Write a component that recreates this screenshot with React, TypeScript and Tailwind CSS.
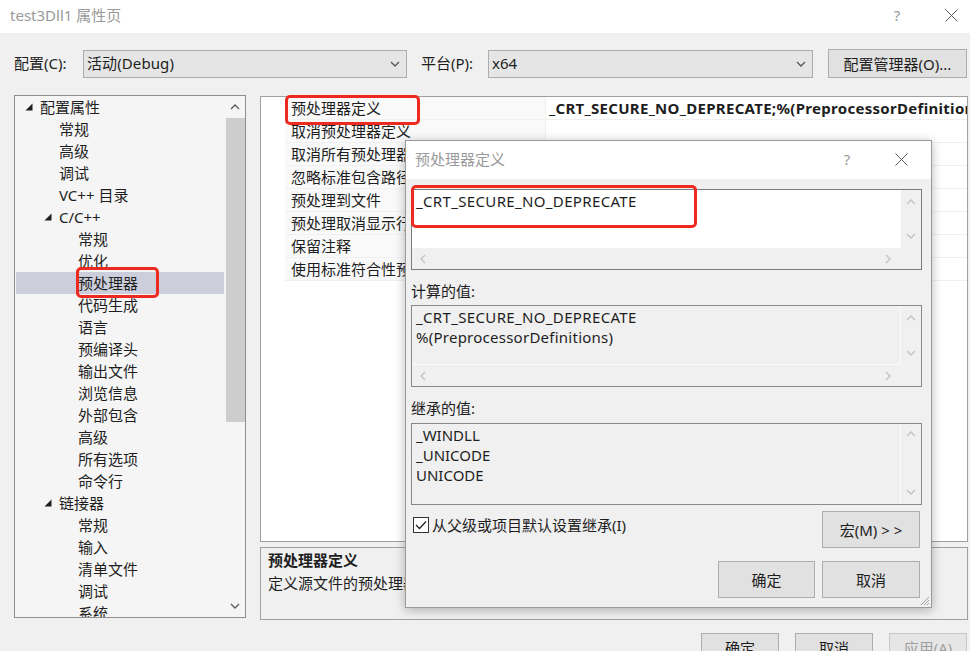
import React from "react";

const Chev = ({ dir, color = "#606060", size = 9 }: { dir: "up" | "down" | "left" | "right"; color?: string; size?: number }) => {
  const pts: Record<string, string> = {
    up: "1,6 5,2 9,6",
    down: "1,2 5,6 9,2",
    left: "6,1 2,5 6,9",
    right: "2,1 6,5 2,9",
  };
  const vertical = dir === "up" || dir === "down";
  return (
    <svg width={vertical ? size + 1 : 8} height={vertical ? 8 : size + 1} viewBox={vertical ? "0 0 10 8" : "0 0 8 10"}>
      <polyline points={pts[dir]} fill="none" stroke={color} strokeWidth="1.3" />
    </svg>
  );
};

const XIcon = ({ size = 13, color = "#5a5a5a" }: { size?: number; color?: string }) => (
  <svg width={size} height={size} viewBox="0 0 13 13">
    <line x1="0.5" y1="0.5" x2="12.5" y2="12.5" stroke={color} strokeWidth="1" />
    <line x1="12.5" y1="0.5" x2="0.5" y2="12.5" stroke={color} strokeWidth="1" />
  </svg>
);

const Tri = () => (
  <svg width="8" height="8" viewBox="0 0 8 8">
    <polygon points="7.5,0.5 7.5,7.5 0.5,7.5" fill="#1e1e1e" />
  </svg>
);

type TreeItem = { t: string; lv: 0 | 1 | 2; open?: boolean; sel?: boolean };
const tree: TreeItem[] = [
  { t: "配置属性", lv: 0, open: true },
  { t: "常规", lv: 1 },
  { t: "高级", lv: 1 },
  { t: "调试", lv: 1 },
  { t: "VC++ 目录", lv: 1 },
  { t: "C/C++", lv: 1, open: true },
  { t: "常规", lv: 2 },
  { t: "优化", lv: 2 },
  { t: "预处理器", lv: 2, sel: true },
  { t: "代码生成", lv: 2 },
  { t: "语言", lv: 2 },
  { t: "预编译头", lv: 2 },
  { t: "输出文件", lv: 2 },
  { t: "浏览信息", lv: 2 },
  { t: "外部包含", lv: 2 },
  { t: "高级", lv: 2 },
  { t: "所有选项", lv: 2 },
  { t: "命令行", lv: 2 },
  { t: "链接器", lv: 1, open: true },
  { t: "常规", lv: 2 },
  { t: "输入", lv: 2 },
  { t: "清单文件", lv: 2 },
  { t: "调试", lv: 2 },
  { t: "系统", lv: 2 },
];

const lvPad: Record<number, string> = { 0: "pl-[10px]", 1: "pl-[29px]", 2: "pl-[48px]" };
const lvPadSel: Record<number, string> = { 0: "pl-[9px]", 1: "pl-[28px]", 2: "pl-[47px]" };

const gridRows = [
  "预处理器定义",
  "取消预处理器定义",
  "取消所有预处理器定义",
  "忽略标准包含路径",
  "预处理到文件",
  "预处理取消显示行号",
  "保留注释",
  "使用标准符合性预处理器",
];

const Btn = ({ children, cls = "", disabled = false }: { children: React.ReactNode; cls?: string; disabled?: boolean }) => (
  <div
    className={`flex items-center justify-center border ${disabled ? "border-[#c8c8c8] text-[#a0a0a0] bg-[#e6e6e6]" : "border-[#adadad] text-[#1e1e1e] bg-[#e1e1e1]"} ${cls}`}
  >
    {children}
  </div>
);

const VScroll = () => (
  <div className="w-[20px] flex flex-col items-center justify-between bg-[#f0f0f0] pt-[8px] pb-[8px]">
    <Chev dir="up" color="#c2c2c2" />
    <Chev dir="down" color="#c2c2c2" />
  </div>
);

const HScroll = ({ bg = "bg-[#f0f0f0]" }: { bg?: string }) => (
  <div className={`h-[21px] flex ${bg}`}>
    <div className="flex-1 flex items-center justify-between pl-[7px] pr-[9px]">
      <Chev dir="left" color="#c2c2c2" />
      <Chev dir="right" color="#c2c2c2" />
    </div>
    <div className="w-[20px]" />
  </div>
);

export default function App() {
  return (
    <div className="relative w-[970px] h-[651px] overflow-hidden bg-[#f0f0f0] text-[15px] text-[#1e1e1e] font-['Noto_Sans','Noto_Sans_CJK_SC',sans-serif] leading-[22px]">
      {/* title bar */}
      <div className="h-[33px] bg-white flex items-center pl-[10px] pb-[3px]">
        <div className="text-[#9a9a9a] flex-1">test3Dll1 属性页</div>
        <div className="text-[#9a9a9a] w-[20px] text-center mr-[38px]">?</div>
        <div className="mr-[12px] flex items-center">
          <XIcon />
        </div>
      </div>

      {/* toolbar */}
      <div className="h-[29px] mt-[16px] flex items-center pl-[14px]">
        <div className="w-[69px] pb-[1px]">配置(C):</div>
        <div className="w-[324px] h-[28px] border border-[#adadad] bg-[#e5e5e5] flex items-center pl-[3px] pr-[6px]">
          <div className="flex-1 pb-[1px] tracking-[0.1px]">活动(Debug)</div>
          <Chev dir="down" color="#555" />
        </div>
        <div className="ml-[14px] w-[67px] pb-[1px]">平台(P):</div>
        <div className="w-[325px] h-[28px] border border-[#adadad] bg-[#e5e5e5] flex items-center pl-[3px] pr-[6px]">
          <div className="flex-1 pb-[1px]">x64</div>
          <Chev dir="down" color="#555" />
        </div>
        <Btn cls="ml-[15px] w-[139px] h-[29px]">配置管理器(O)...</Btn>
      </div>

      {/* main */}
      <div className="mt-[17px] flex items-start pl-[14px]">
        {/* tree */}
        <div className="w-[232px] h-[523px] border border-[#8e8e8e] bg-[#f5f5f5] flex overflow-hidden">
          <div className="flex-1 flex flex-col overflow-hidden">
            {tree.map((it, i) => (
              <div
                key={i}
                className={`h-[22px] shrink-0 flex items-center ${it.sel ? `bg-[#cccedb] mx-[1px] ${lvPadSel[it.lv]}` : lvPad[it.lv]}`}
              >
                <div className="w-[15px] flex items-center">{it.open ? <Tri /> : null}</div>
                <div className="whitespace-nowrap">{it.t}</div>
              </div>
            ))}
          </div>
          <div className="w-[20px] flex flex-col items-center">
            <div className="h-[22px] flex items-center">
              <Chev dir="up" color="#5a5a5a" />
            </div>
            <div className="w-[19px] h-[304px] bg-[#cdcdcd]" />
            <div className="flex-1" />
            <div className="h-[22px] flex items-center">
              <Chev dir="down" color="#5a5a5a" />
            </div>
          </div>
        </div>

        {/* right column */}
        <div className="ml-[14px] w-[708px] flex flex-col mt-[1px]">
          <div className="h-[446px] border border-[#a0a0a0] bg-white overflow-hidden">
            {gridRows.map((r, i) => (
              <div key={i} className="h-[23px] flex items-center">
                <div className="w-[24px] h-full bg-white" />
                <div className="w-[260px] h-full flex items-center pl-[6px] bg-[#f9f9f9] border-b border-[#f0f0f0] whitespace-nowrap overflow-hidden">{r}</div>
                <div className="flex-1 h-full flex items-center pl-[3px] border-l border-[#e8e8e8] border-b border-[#f0f0f0] whitespace-nowrap overflow-hidden font-bold tracking-[0.3px]">
                  {i === 0 ? "_CRT_SECURE_NO_DEPRECATE;%(PreprocessorDefinitions)" : ""}
                </div>
              </div>
            ))}
          </div>
          <div className="mt-[5px] h-[73px] border border-[#a0a0a0] pl-[7px] pt-[1px]">
            <div className="font-bold">预处理器定义</div>
            <div className="mt-[1px]">定义源文件的预处理器符号。</div>
          </div>
        </div>
      </div>

      {/* bottom buttons */}
      <div className="mt-[13px] flex justify-end pr-[3px] gap-[16px]">
        <Btn cls="w-[78px] h-[30px]">确定</Btn>
        <Btn cls="w-[78px] h-[30px]">取消</Btn>
        <Btn cls="w-[78px] h-[30px]" disabled>
          应用(A)
        </Btn>
      </div>

      {/* red annotation boxes */}
      <div className="absolute left-[76px] top-[267px] w-[83px] h-[31px] border-[3px] border-[#ec2a20] rounded-[5px]" />
      <div className="absolute left-[285px] top-[95px] w-[135px] h-[30px] border-[3px] border-[#ec2a20] rounded-[5px]" />

      {/* dialog */}
      <div className="absolute left-[405px] top-[140px] w-[527px] h-[468px] bg-[#f0f0f0] border border-[#9a9a9a] shadow-[0_2px_10px_rgba(0,0,0,0.28)] flex flex-col">
        <div className="h-[38px] bg-white flex items-center pl-[9px] pb-[2px]">
          <div className="flex-1 text-[#9a9a9a]">预处理器定义</div>
          <div className="text-[#9a9a9a] w-[20px] text-center mr-[38px]">?</div>
          <div className="mr-[23px] flex items-center">
            <XIcon />
          </div>
        </div>
        <div className="flex-1 flex flex-col pl-[5px] pr-[9px] pt-[10px]">
          {/* edit box */}
          <div className="h-[81px] border border-[#7a7a7a] flex flex-col bg-[#f0f0f0]">
            <div className="flex-1 flex">
              <div className="flex-1 bg-white pl-[4px] pt-[1px] leading-[20px] tracking-[0.35px]">_CRT_SECURE_NO_DEPRECATE</div>
              <VScroll />
            </div>
            <HScroll />
          </div>

          <div className="mt-[10px] h-[22px]">计算的值:</div>
          <div className="mt-[3px] h-[82px] border border-[#8a8a8a] flex flex-col bg-[#f0f0f0]">
            <div className="flex-1 flex">
              <div className="flex-1 pl-[4px] pt-[1px] leading-[20px] border-r border-b border-[#fafafa]">
                <div className="tracking-[0.35px]">_CRT_SECURE_NO_DEPRECATE</div>
                <div className="tracking-[0.25px]">%(PreprocessorDefinitions)</div>
              </div>
              <VScroll />
            </div>
            <HScroll />
          </div>

          <div className="mt-[10px] h-[22px]">继承的值:</div>
          <div className="mt-[4px] h-[82px] border border-[#8a8a8a] flex bg-[#f0f0f0]">
            <div className="flex-1 pl-[4px] pt-[1px] leading-[20px] border-r border-[#fafafa]">
              <div>_WINDLL</div>
              <div>_UNICODE</div>
              <div>UNICODE</div>
            </div>
            <div className="w-[20px] flex flex-col items-center justify-between pt-[6px] pb-[8px]">
              <Chev dir="up" color="#c2c2c2" />
              <Chev dir="down" color="#c2c2c2" />
            </div>
          </div>

          <div className="mt-[6px] flex justify-between items-start pr-[2px]">
            <div className="mt-[3px] h-[22px] flex items-center pl-[2px]">
              <div className="w-[16px] h-[16px] border border-[#333] bg-white flex items-center justify-center">
                <svg width="12" height="10" viewBox="0 0 12 10">
                  <polyline points="1,5 4.5,8.5 11,1.5" fill="none" stroke="#222" strokeWidth="1.3" />
                </svg>
              </div>
              <div className="ml-[3px]">从父级或项目默认设置继承(I)</div>
            </div>
            <Btn cls="w-[98px] h-[37px]">宏(M) &gt; &gt;</Btn>
          </div>

          <div className="mt-[13px] flex justify-end gap-[7px] pr-[2px]">
            <Btn cls="w-[97px] h-[37px]">确定</Btn>
            <Btn cls="w-[98px] h-[37px]">取消</Btn>
          </div>
        </div>
        {/* resize grip */}
        <div className="absolute right-[1px] bottom-[1px]">
          <svg width="11" height="11" viewBox="0 0 11 11">
            <line x1="10" y1="2" x2="2" y2="10" stroke="#a0a0a0" strokeWidth="1" />
            <line x1="10" y1="5" x2="5" y2="10" stroke="#a0a0a0" strokeWidth="1" />
            <line x1="10" y1="8" x2="8" y2="10" stroke="#a0a0a0" strokeWidth="1" />
          </svg>
        </div>
      </div>
      <div className="absolute left-[411px] top-[185px] w-[286px] h-[43px] border-[3px] border-[#ec2a20] rounded-[5px]" />
    </div>
  );
}
